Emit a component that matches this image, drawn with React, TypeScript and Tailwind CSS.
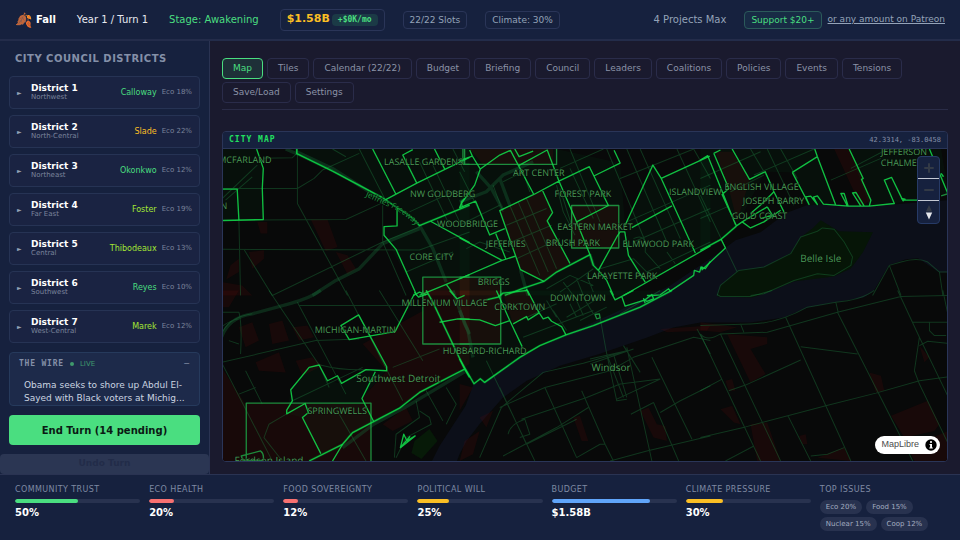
import React, { useState } from 'react';

const tabs = [
  'Map', 'Tiles', 'Calendar (22/22)', 'Budget', 'Briefing', 'Council', 'Leaders',
  'Coalitions', 'Policies', 'Events', 'Tensions', 'Save/Load', 'Settings',
];

const districts = [
  { id: 1, area: 'Northwest', leader: 'Calloway', eco: 18, color: 'text-[#4ade80]' },
  { id: 2, area: 'North-Central', leader: 'Slade', eco: 22, color: 'text-[#fbbf24]' },
  { id: 3, area: 'Northeast', leader: 'Okonkwo', eco: 12, color: 'text-[#4ade80]' },
  { id: 4, area: 'Far East', leader: 'Foster', eco: 19, color: 'text-[#a3e635]' },
  { id: 5, area: 'Central', leader: 'Thibodeaux', eco: 13, color: 'text-[#a3e635]' },
  { id: 6, area: 'Southwest', leader: 'Reyes', eco: 10, color: 'text-[#4ade80]' },
  { id: 7, area: 'West-Central', leader: 'Marek', eco: 12, color: 'text-[#a3e635]' },
];

const metrics = [
  { label: 'Community Trust', value: '50%', fill: 50, color: 'bg-[#4ade80]' },
  { label: 'Eco Health', value: '20%', fill: 20, color: 'bg-[#f87171]' },
  { label: 'Food Sovereignty', value: '12%', fill: 12, color: 'bg-[#f87171]' },
  { label: 'Political Will', value: '25%', fill: 25, color: 'bg-[#fbbf24]' },
  { label: 'Budget', value: '$1.58B', fill: 79, color: 'bg-[#60a5fa]' },
  { label: 'Climate Pressure', value: '30%', fill: 30, color: 'bg-[#fbbf24]' },
];

const issues = ['Eco 20%', 'Food 15%', 'Nuclear 15%', 'Coop 12%'];

// Map geometry is stored in six tiles, three units to a map pixel
const tiles = [
  {
    x: 220, y: 125,
    red: 'M275 283L325 283L355 365L320 378ZM350 380L385 390L410 430L385 447ZM115 290H145V325H125ZM35 420L60 400V440L22 462ZM90 380L135 375V400L100 430ZM8 470L70 480L100 510H8ZM612 457H750V510H612Z',
    tint: 'M233 72H750V510H592L494 330V304L533 302V250L485 215L233 86ZM8 72H115L133 130V283H8Z',
    glow: 'M280 510L350 465L420 430L490 355L600 310M600 300L640 370L680 470M233 80L340 130L492 227M200 72L233 86',
    dim: 'M8 190H235L285 160L310 135M235 72V235L385 510M310 135L420 85M8 285L380 283L500 228M8 372L600 374L750 320M160 510L490 350L600 305M75 372L160 510M60 284L65 510M490 240V350L560 510M8 222L115 120M20 225L100 155M133 100L220 98L233 86M420 72L500 228M600 110L690 300M560 440L700 380M700 72L735 140M570 260L700 200M640 120L720 290M340 72L380 95',
    mid: 'M610 510V455H750M735 72V118H750',
    bright: 'M8 192L55 192L60 284M8 286L133 283L130 190L133 130L113 72M460 72L530 208M492 227L592 174L676 133L750 97M592 174L550 90L580 74M645 72L676 133M533 250V302L494 304V330L530 372L592 510M633 288L750 352M600 510L680 477L750 448M680 477L705 510M728 245L725 230L735 220M582 510L600 500L620 508',
    bold: 'M233 72V86L340 138L485 215L540 252Q580 275 600 301L750 240',
  },
  {
    x: 460, y: 125,
    red: 'M120 256L247 194L278 262L262 287L330 414L252 468L182 433ZM335 241H476V368H335ZM30 72H280V118H70ZM0 457H122V510H0Z',
    tint: 'M0 72H290L480 114L495 300L578 120L603 160L750 93V362L490 510H0Z',
    glow: 'M50 140L95 190L130 255M0 230L80 200L130 150L220 110M120 160L150 240M182 433L195 480L205 510M390 388L400 420',
    dim: 'M150 240L240 450M175 230L265 440M200 220L290 430M140 300L260 250M155 350L275 300M170 400L300 340M500 72L620 350M540 72L660 340M480 160L700 72M500 290L750 180M520 350L750 250M560 440L750 350M650 72L750 290M290 180L310 260L345 330M300 190L335 300M440 72L560 360M300 130L430 72M330 72L420 290M330 130L400 280M0 140L60 260M0 300L120 240M20 370L60 350L150 380M100 180L130 260M130 170L190 140L210 200M420 430L520 400L560 440M300 500L400 430M260 490L330 450L400 480M310 470L340 510M350 460L370 510M380 450L400 500M520 340Q560 320 555 380L600 430M620 380L645 415M700 72L750 160',
    mid: 'M10 72V118H290V72M335 241H476V368H335ZM0 455H123V510',
    bright: 'M0 107L38 93L30 75M38 93L62 132L120 90L152 76L222 208L120 256L182 433L252 468M178 121L262 75L297 168L388 125L445 241L350 290L297 168L222 208M165 72L178 95L220 78M403 152L480 114L462 76M247 194L278 262L262 287L330 414M62 132L45 180L5 235L0 248L48 228L90 329L135 310M108 325L138 400M0 338L127 405L168 392M0 460L127 405M415 435L470 335L480 320H494L505 390L555 470M415 435L440 465L460 510M200 490L208 510M495 300L578 120L603 160L748 93M603 160L705 383M515 307L635 242M490 510L750 362M560 510H575L600 508L625 490L630 497L700 450L702 435L718 440L722 425L735 430L750 408M350 290L390 388',
    bold: 'M135 510L185 490L252 468L290 440L390 388L400 420L415 435',
  },
  {
    x: 700, y: 125,
    red: 'M45 80H95L147 163L110 290L85 190ZM400 72H445L487 160L510 225L480 243Z',
    tint: 'M0 72H342L405 240H320L275 142L194 140L108 302L0 375ZM445 72H720L742 205L580 235L505 243Z',
    glow: '',
    dim: 'M0 210L110 440M0 160L180 80M150 72L220 190M200 72L280 240M160 150L340 72M390 165L540 100M450 130L560 72M90 200L190 150M240 72L290 160M0 280L80 245M515 510L565 420L600 410Q650 395 680 410L715 440H742M565 420L600 510M715 440L725 510M50 510L60 480L115 435L190 425L270 385L300 335L350 318L365 308L400 312L430 350L455 395L450 420L400 450L350 445L280 465L190 505L150 510',
    mid: 'M720 212L742 205',
    bright: 'M0 105L22 92L105 298M40 85L85 190L65 208L108 302M40 85L60 75M95 72L147 163L194 140L220 200L250 260M275 142L350 95L405 240L368 237L350 212L338 216L350 238L330 213L315 215L325 238L275 142M342 72L350 95M445 72L487 160L482 163L510 225L505 243L480 243L455 203L465 202L490 243L440 243L420 205L430 205L442 243L405 240M505 243L580 235L550 165L572 157L605 225L650 225M600 220L612 222L605 228M685 72L740 205M720 145L727 155M108 302L125 290L150 308L190 290L240 255M150 265L185 235L220 200M200 245L215 270L180 280M125 290L200 245M62 342L75 368L5 433V425L0 430',
    bold: 'M108 302L62 342L0 375',
  },
  {
    x: 220, y: 290,
    red: 'M430 160L612 60V0H750V220L463 392L428 323L502 240ZM8 230L80 340V510H8ZM82 337H455V510H82ZM110 215L180 185L200 245L120 240ZM60 110L100 95L120 150L80 170ZM150 100L190 90L210 150L160 160ZM220 110L265 105L285 140L240 150ZM230 210L280 200L310 225L250 255ZM10 0H60L30 50H8ZM490 400L560 350L580 390L520 420Z',
    tint: 'M300 223L325 270L367 278L440 237H502L428 323L463 392L305 488L250 380L203 369L215 297L270 230Z',
    glow: 'M8 140Q30 80 100 70L210 40Q270 25 305 0M370 470L463 400L560 348L735 243M700 0L735 100L750 130',
    dim: 'M8 130Q30 80 100 70M8 110Q30 90 60 85M8 215L290 150L420 145M8 65H60Q70 100 65 190M8 215L160 510M235 35L380 310M150 0L300 223L330 290M380 0L550 330M240 45H600M300 222Q370 240 440 237M203 369L150 400L135 440L190 510M590 330L600 380L530 430L525 500M600 360L630 380L635 400L560 440L530 500M620 300L670 390M680 290L710 340L680 400M60 310L110 290M480 0L610 210M520 230L660 175M80 240L130 340M220 330L430 230M360 370L440 510M30 150L60 160',
    mid: 'M82 510V337H455V510M610 0V160H750M67 495L85 490L125 480Q137 490 132 508H72Z',
    bright: 'M585 10L527 123L390 147L365 105L418 73L502 228V240L440 237L367 278L355 255L325 270L300 223L270 230L215 297L220 330L203 358V369L258 338L268 365L250 380L305 488M468 243L428 323L463 392M370 460L340 510M660 95L715 85L750 86M585 5L597 20L625 10M690 0L712 25L735 15M543 470L553 430L563 450L587 435L543 470L572 436',
    bold: 'M270 510L370 460L400 425L463 392L540 352L600 305L735 235L750 260M620 0L640 35L735 235',
  },
  {
    x: 460, y: 290,
    red: 'M0 0H123V160H0ZM130 10L200 0L238 67L160 100ZM0 280L40 290L0 360ZM340 380L360 375L385 450L365 450ZM540 360L565 350L590 400L615 405L620 450L580 440ZM60 380L100 360L80 410ZM15 450L60 420L40 490L0 510ZM600 115L750 105L740 120L620 125Z',
    tint: 'M123 0H635L318 133L180 200L75 275L43 279L0 205V0Z',
    glow: 'M0 60L25 120L40 200',
    dim: 'M120 350L255 290L450 240L520 200L700 140L750 150M255 290L350 500M365 300L435 460L460 510M200 460L350 385M185 385L380 320L480 280L600 265M130 495L290 410L385 350M350 500L420 460L435 460M80 210L225 510M420 80L440 190L490 320M440 190L470 330L500 325M460 190L500 320M500 170L575 510M575 200L695 445M600 365L660 330L750 285M450 510L560 480L750 435M580 335L655 510M60 500L125 350L250 245L370 218L500 180M390 205L500 180M390 220L520 175M145 430Q150 400 195 385L210 430L180 440M180 90L290 40M190 140L400 60M280 60L320 120M330 40L350 80M350 30L370 75M370 20L400 70M260 30L290 80M320 80L420 20M360 90L440 50M470 325L600 265M600 0L480 70M710 115L750 190M490 165L540 245M512 370L580 335M120 290L200 460',
    mid: 'M123 0V160H0M410 85L405 72L418 70L420 82Z',
    bright: 'M0 85L60 88L107 105L150 90L110 0M160 100L200 78L205 88L238 67L203 0M238 67L250 85L265 80L275 92L305 108L318 133M150 90L187 168M450 0L465 28L520 0M465 28L485 18L495 47L555 28L575 12L580 25L560 33L550 25L555 38',
    bold: 'M0 205L43 279L62 264L75 275L180 200L240 165L318 133L400 105L540 50L635 0M80 28L115 20L130 8L203 0',
  },
  {
    x: 700, y: 290,
    red: 'M80 130L200 140V160L150 175L195 250L150 275ZM570 375L680 330L715 400L700 420L610 440ZM150 400L200 395L240 510H170ZM0 95L110 110L60 125L0 120ZM505 245L540 255L550 300L525 305ZM655 165L685 200L670 215ZM350 500L430 470L450 510ZM60 355L95 345L120 400L100 395ZM75 270L95 265L105 300H85ZM295 435L315 430L320 460H305ZM620 470L742 420V510H640Z',
    tint: '',
    glow: '',
    dim: 'M0 130Q20 155 60 130L200 125L410 65L600 18L742 15M0 105L150 100Q230 100 320 50L405 35Q480 30 520 0M0 130L180 510M60 130L240 510M255 80L450 510M410 65L610 460L635 510M590 0L655 140L742 320M0 440L135 408L375 345L525 307L655 270L742 258M0 300L65 265M85 300L135 283L300 208M300 168L470 190M655 140L640 240L655 280L742 460M655 165L680 152L742 158M635 95H742V125M685 95V120L700 135H735M262 375L330 510M75 510L160 465M330 495L380 490L430 470M405 35L412 65M725 0L742 80M120 100L130 125M50 12L60 18H150L215 0',
    mid: '',
    bright: '',
    bold: '',
  },
];

const labels = [
  { x: 246, y: 163, text: 'MCFARLAND' },
  { x: 225, y: 209, text: 'N' },
  { x: 424, y: 165, text: 'LASALLE GARDENS' },
  { x: 443, y: 197, text: 'NW GOLDBERG' },
  { x: 468, y: 227, text: 'WOODBRIDGE' },
  { x: 432, y: 260, text: 'CORE CITY' },
  { x: 539, y: 176, text: 'ART CENTER' },
  { x: 583, y: 197, text: 'FOREST PARK' },
  { x: 595, y: 230, text: 'EASTERN MARKET' },
  { x: 506, y: 247, text: 'JEFFERIES' },
  { x: 573, y: 246, text: 'BRUSH PARK' },
  { x: 658, y: 247, text: 'ELMWOOD PARK' },
  { x: 622, y: 279, text: 'LAFAYETTE PARK' },
  { x: 494, y: 285, text: 'BRIGGS' },
  { x: 578, y: 301, text: 'DOWNTOWN' },
  { x: 445, y: 305, text: 'MILLENIUM VILLAGE' },
  { x: 520, y: 309, text: 'CORKTOWN' },
  { x: 356, y: 332, text: 'MICHIGAN-MARTIN' },
  { x: 485, y: 353, text: 'HUBBARD-RICHARD' },
  { x: 338, y: 413, text: 'SPRINGWELLS' },
  { x: 695, y: 195, text: 'ISLANDVIEW' },
  { x: 761, y: 190, text: 'ENGLISH VILLAGE' },
  { x: 773, y: 204, text: 'JOSEPH BARRY' },
  { x: 759, y: 219, text: 'GOLD COAST' },
  { x: 903, y: 155, text: 'JEFFERSON' },
  { x: 903, y: 166, text: 'CHALMERS' },
];

const places = [
  { x: 820, y: 262, text: 'Belle Isle' },
  { x: 611, y: 370, text: 'Windsor' },
  { x: 399, y: 381, text: 'Southwest Detroit' },
  { x: 270, y: 463, text: 'Fordson Island' },
];

function CityMap() {
  return (
    <svg
      viewBox="223 149 724 311"
      preserveAspectRatio="xMidYMid slice"
      className="absolute inset-0 h-full w-full"
      role="img"
      aria-label="City map"
    >
      <rect x="0" y="0" width="1200" height="700" fill="#080909" />
      <path
        fill="#0c0f19"
        d="M948 200L870 206L835 204L806 205L785 213L760 232L735 240L722 250L700 265L670 285L615 312L566 334L520 357L484 381L474 383L466 405L440 445L432 461H457L460 453L467 440L480 423L503 397L527 380L560 365L600 353L647 337L673 327L700 322H750L783 317L807 307L833 302L863 297L873 290L888 265L905 259L917 258L938 272H948Z"
      />
      <path fill="#061507" d="M717 296L720 285L738 270L763 267L790 253L800 237L812 228L820 220L838 231L872 232L862 252L850 268L833 276L793 281L767 292L752 297Z" />
      <path fill="#071a08" d="M415 440L430 428L438 440L422 458L412 452Z" />

      {tiles.map(tile => (
        <g
          key={`${tile.x}-${tile.y}`}
          transform={`translate(${tile.x} ${tile.y}) scale(0.33333)`}
          fill="none"
          strokeLinejoin="round"
        >
          <path d={tile.tint} fill="#00ff55" fillOpacity="0.03" />
          <path d={tile.red} fill="#c01010" fillOpacity="0.09" />
          <path d={tile.glow} stroke="#17693a" strokeOpacity="0.35" strokeWidth="10" />
          <path d={tile.dim} stroke="#1d7a3f" strokeOpacity="0.4" strokeWidth="3" />
          <path d={tile.mid} stroke="#1f9a42" strokeOpacity="0.9" strokeWidth="4" />
          <path d={tile.bright} stroke="#12d348" strokeOpacity="0.9" strokeWidth="4" />
          <path d={tile.bold} stroke="#00ff55" strokeOpacity="0.15" strokeWidth="8" />
          <path d={tile.bold} stroke="#0fdc49" strokeOpacity="0.85" strokeWidth="4" />
        </g>
      ))}

      <g
        fontFamily="'Open Sans', 'Noto Sans', sans-serif"
        textRendering="geometricPrecision"
        textAnchor="middle"
        fill="#4a9a57"
        stroke="#050805"
        strokeWidth="1"
        strokeOpacity="0.6"
        paintOrder="stroke"
      >
        {labels.map(label => (
          <text key={label.text} x={label.x} y={label.y} fontSize="9">{label.text}</text>
        ))}
        {places.map(place => (
          <text key={place.text} x={place.x} y={place.y} fontSize="10">{place.text}</text>
        ))}
        <path id="freeway" d="M366 196L388 206Q404 212 417 226" fill="none" stroke="none" />
        <text fontSize="8" textAnchor="start" fill="#1f9a42">
          <textPath href="#freeway">Jeffries Freeway</textPath>
        </text>
      </g>
    </svg>
  );
}

export default function App() {
  const [activeTab, setActiveTab] = useState('Map');
  const [wireOpen, setWireOpen] = useState(true);

  return (
    <div className="flex h-screen flex-col overflow-hidden bg-[#1a1a2e] font-['DejaVu_Sans',sans-serif] text-[#e8eaf0]">
      {/* Header */}
      <header className="flex h-[41px] shrink-0 items-center justify-between border-b-2 border-[#232c4a] bg-[#16213e] px-[15px]">
        <div className="flex items-center gap-[18px] text-[10px]">
          <div className="flex items-center gap-[21px]">
            <div className="flex items-center gap-1 font-bold text-white">
              <span className="text-[14px] leading-4">🍂</span>
              <span>Fall</span>
            </div>
            <span>Year 1 / Turn 1</span>
            <span className="text-[#4ade80]">Stage: Awakening</span>
            <div className="flex h-[22px] items-center gap-0.5 rounded-sm border border-[#2a3558] px-1.5">
              <span className="text-[11px] font-bold text-[#fbbf24]">$1.58B</span>
              <span className="rounded-sm bg-[#1b3a46] px-1.5 font-['DejaVu_Sans_Mono',monospace] text-[8px] font-bold leading-3 text-[#4ade80]">
                +$0K/mo
              </span>
            </div>
          </div>
          <span className="rounded-sm border border-[#2a3558] px-1.5 text-[9px] leading-4 text-[#94a3b8]">22/22 Slots</span>
          <span className="rounded-sm border border-[#2a3558] px-1.5 text-[9px] leading-4 text-[#94a3b8]">Climate: 30%</span>
        </div>
        <div className="flex items-center text-[9px] text-[#94a3b8]">
          <span className="mr-[18px] text-[10px]">4 Projects Max</span>
          <a href="#support" className="mr-1.5 rounded-sm border border-[#2b5a5a] bg-[#182b45] px-1.5 leading-4 text-[#4ade80]">
            Support $20+
          </a>
          <a href="#patreon" className="underline">or any amount on Patreon</a>
        </div>
      </header>

      <div className="flex min-h-0 flex-1">
        {/* Sidebar */}
        <aside className="flex w-[210px] shrink-0 flex-col overflow-hidden border-r border-[#2a3352] bg-[#16213e]">
          <h2 className="px-[15px] pt-3 pb-[11px] text-[10px] font-bold uppercase leading-3 tracking-wider text-[#8490a8]">
            City Council Districts
          </h2>
          <ul className="flex flex-col gap-1.5 px-[9px]">
            {districts.map(d => (
              <li key={d.id}>
                <button
                  type="button"
                  className="flex h-[33px] w-full items-center rounded border border-[#263354] bg-[#1a2342] px-[7px] text-left"
                >
                  <span className="w-[14px] text-[6px] text-[#94a3b8]">►</span>
                  <span className="flex-1">
                    <span className="block text-[9px] font-bold leading-[10px] text-white">District {d.id}</span>
                    <span className="block text-[7px] leading-[9px] text-[#7a849c]">{d.area}</span>
                  </span>
                  <span className={`text-[8px] ${d.color}`}>{d.leader}</span>
                  <span className="ml-[5px] text-[7px] text-[#7a849c]">Eco {d.eco}%</span>
                </button>
              </li>
            ))}
          </ul>

          <section className="mx-[9px] mt-[9px] h-[54px] shrink-0 overflow-hidden rounded border border-[#263a5c] bg-[#1d2a4a]">
            <div className="flex items-center px-[9px] pt-[5px] leading-3">
              <h3 className="font-['DejaVu_Sans_Mono',monospace] text-[8px] font-bold tracking-widest text-[#8490a8]">THE WIRE</h3>
              <span className="ml-1.5 h-1 w-1 rounded-full bg-[#3f9a6c]" />
              <span className="ml-1.5 text-[7px] text-[#3f9a6c]">LIVE</span>
              <button
                type="button"
                aria-label="Toggle wire"
                onClick={() => setWireOpen(!wireOpen)}
                className="ml-auto text-[8px] text-[#8490a8]"
              >
                −
              </button>
            </div>
            {wireOpen && (
              <p className="px-[14px] pt-[9px] text-[9px] leading-[13px] text-[#cbd5e1]">
                Obama seeks to shore up Abdul El-Sayed with Black voters at Michig...
              </p>
            )}
          </section>

          <button
            type="button"
            className="mx-[9px] mt-[9px] h-[30px] shrink-0 rounded bg-[#4ade80] text-[10px] font-bold text-[#0a1a14]"
          >
            End Turn (14 pending)
          </button>
          <button
            type="button"
            disabled
            className="mt-[9px] h-5 shrink-0 rounded bg-[#2b3653] text-[9px] font-bold text-[#222c49]"
          >
            Undo Turn
          </button>
        </aside>

        {/* Main panel */}
        <main className="flex min-w-0 flex-1 flex-col px-3 pt-[17px] pb-3">
          <nav className="mb-[21px] flex flex-wrap gap-x-1 gap-y-[3px] border-b border-[#2a2c47] pb-1.5">
            {tabs.map(tab => (
              <button
                key={tab}
                type="button"
                onClick={() => setActiveTab(tab)}
                className={`h-[21px] rounded border px-2.5 text-[9px] ${
                  activeTab === tab
                    ? 'border-[#4ade80] bg-[#1e3038] text-[#4ade80]'
                    : 'border-[#2a2c4a] text-[#8b93a7]'
                }`}
              >
                {tab}
              </button>
            ))}
          </nav>

          <section className="flex min-h-0 flex-1 flex-col overflow-hidden rounded-sm border border-[#2a3558]">
            <div className="flex h-[17px] shrink-0 items-center justify-between border-b border-[#2a3558] bg-[#16213e] px-1.5 font-['DejaVu_Sans_Mono',monospace]">
              <h2 className="text-[8px] font-bold tracking-[1px] text-[#22e060]">CITY MAP</h2>
              <span className="text-[7px] text-[#8490a8]">42.3314, -83.0458</span>
            </div>
            <div className="relative flex-1 overflow-hidden bg-[#080909]">
              <CityMap />
              <div className="absolute top-[7px] right-[7px] flex w-[23px] flex-col divide-y divide-[#c3c8d4] overflow-hidden rounded-sm border border-[#263a66] bg-[#16213e]">
                <button type="button" aria-label="Zoom in" className="flex h-[22px] items-center justify-center">
                  <svg viewBox="0 0 10 10" className="h-2.5 w-2.5" stroke="#333a46" strokeWidth="2" strokeLinecap="round">
                    <path d="M5 1V9M1 5H9" />
                  </svg>
                </button>
                <button type="button" aria-label="Zoom out" className="flex h-[22px] items-center justify-center">
                  <svg viewBox="0 0 10 10" className="h-2.5 w-2.5" stroke="#333a46" strokeWidth="2" strokeLinecap="round">
                    <path d="M1 5H9" />
                  </svg>
                </button>
                <button type="button" aria-label="Reset bearing" className="flex h-[22px] items-center justify-center">
                  <svg viewBox="0 0 8 16" className="h-4 w-2">
                    <path d="M1 7.500L4 1L7 7.500Z" fill="#333a46" />
                    <path d="M0.800 8.500L4 15.500L7.200 8.500Z" fill="#e5e7eb" />
                  </svg>
                </button>
              </div>
              <div className="absolute right-[7px] bottom-[7px] flex h-[18px] items-center gap-1.5 rounded-full bg-white pr-[3px] pl-1.5 font-['Liberation_Sans',sans-serif] text-[9px] text-[#4b4b4b]">
                <a href="#maplibre">MapLibre</a>
                <svg viewBox="0 0 12 12" className="h-3 w-3">
                  <circle cx="6" cy="6" r="5.700" fill="#000" />
                  <circle cx="6" cy="3" r="1.100" fill="#fff" />
                  <path d="M4.500 5H7V8.500H7.800V9.500H4.300V8.500H5.100V6H4.500Z" fill="#fff" />
                </svg>
              </div>
            </div>
          </section>
        </main>
      </div>

      {/* Metrics */}
      <footer className="grid shrink-0 grid-cols-7 gap-[9px] border-t border-[#2a3352] bg-[#16213e] px-[15px] pt-[9px] pb-[9px]">
        {metrics.map(m => (
          <div key={m.label}>
            <div className="whitespace-nowrap text-[8px] uppercase leading-3 tracking-wider text-[#7f8aa3]">{m.label}</div>
            <div className="mt-[3px] h-1 overflow-hidden rounded-full bg-[#28324f]">
              <div className={`h-full rounded-full ${m.color}`} style={{ width: `${m.fill}%` }} />
            </div>
            <div className="mt-[3px] text-[10px] font-bold leading-[14px] text-white">{m.value}</div>
          </div>
        ))}
        <div>
          <div className="text-[8px] uppercase leading-3 tracking-wider text-[#7f8aa3]">Top Issues</div>
          <div className="mt-1 flex flex-wrap gap-x-1 gap-y-[3px]">
            {issues.map(issue => (
              <span key={issue} className="rounded-full bg-[#28324f] px-1.5 text-[7px] leading-[14px] text-[#a3adc0]">
                {issue}
              </span>
            ))}
          </div>
        </div>
      </footer>
    </div>
  );
}
